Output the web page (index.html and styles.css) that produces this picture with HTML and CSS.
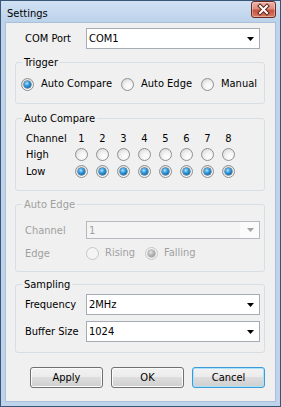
FILE: index.html
```html
<!DOCTYPE html>
<html lang="en">
<head>
  <meta charset="UTF-8" />
  <title>Settings</title>
  <link rel="stylesheet" href="styles.css">
</head>
<body>

  <div class="window">
    <div class="titlebar">
      <span class="title">Settings</span>
      <button class="close-btn" aria-label="Close">
        <svg width="23" height="15" viewBox="0 0 23 15">
          <path d="M8 4l7 7M15 4l-7 7" stroke="#5a2116" stroke-width="4" stroke-linecap="square" />
          <path d="M8 4l7 7M15 4l-7 7" stroke="#fff" stroke-width="2" stroke-linecap="square" />
        </svg>
      </button>
    </div>

    <div class="client">
      <div class="form-row com-row">
        <span>COM Port</span>
        <div class="combo">
          <span>COM1</span>
          <svg class="arrow" width="7" height="4" viewBox="0 0 7 4"><path d="M0 0h7L3.5 4z" /></svg>
        </div>
      </div>

      <fieldset class="group trigger-group">
        <legend>Trigger</legend>
        <div class="radio-row">
          <label class="radio checked"><span class="radio-box"></span>Auto Compare</label>
          <label class="radio"><span class="radio-box"></span>Auto Edge</label>
          <label class="radio"><span class="radio-box"></span>Manual</label>
        </div>
      </fieldset>

      <fieldset class="group compare-group">
        <legend>Auto Compare</legend>
        <div class="channel-grid" id="channelGrid">
          <span class="row-label">Channel</span>
        </div>
      </fieldset>

      <fieldset class="group edge-group disabled">
        <legend>Auto Edge</legend>
        <div class="form-row">
          <span>Channel</span>
          <div class="combo small">
            <span>1</span>
            <svg class="arrow" width="7" height="4" viewBox="0 0 7 4"><path d="M0 0h7L3.5 4z" /></svg>
          </div>
        </div>
        <div class="form-row edge-row">
          <span>Edge</span>
          <div class="radio-row">
            <label class="radio"><span class="radio-box"></span>Rising</label>
            <label class="radio checked"><span class="radio-box"></span>Falling</label>
          </div>
        </div>
      </fieldset>

      <fieldset class="group sampling-group">
        <legend>Sampling</legend>
        <div class="form-row">
          <span>Frequency</span>
          <div class="combo">
            <span>2MHz</span>
            <svg class="arrow" width="7" height="4" viewBox="0 0 7 4"><path d="M0 0h7L3.5 4z" /></svg>
          </div>
        </div>
        <div class="form-row buffer-row">
          <span>Buffer Size</span>
          <div class="combo">
            <span>1024</span>
            <svg class="arrow" width="7" height="4" viewBox="0 0 7 4"><path d="M0 0h7L3.5 4z" /></svg>
          </div>
        </div>
      </fieldset>

      <div class="buttons">
        <button class="btn">Apply</button>
        <button class="btn">OK</button>
        <button class="btn default">Cancel</button>
      </div>
    </div>
  </div>

  <script>
    // build the channel table: header, high row, low row
    const grid = document.getElementById('channelGrid');
    for (let i = 1; i <= 8; i++) {
      const n = document.createElement('span');
      n.className = 'num';
      n.textContent = i;
      grid.appendChild(n);
    }
    ['High', 'Low'].forEach((name) => {
      const label = document.createElement('span');
      label.className = 'row-label';
      label.textContent = name;
      grid.appendChild(label);
      for (let i = 0; i < 8; i++) {
        const r = document.createElement('span');
        r.className = name === 'Low' ? 'radio-box on' : 'radio-box';
        grid.appendChild(r);
      }
    });
  </script>

</body>
</html>
```

FILE: styles.css
```css
* {
  box-sizing: border-box;
}

html,
body {
  margin: 0;
}

body {
  width: 281px;
  height: 407px;
  font-family: "DejaVu Sans Condensed", "Liberation Sans", sans-serif;
  font-size: 11px;
  color: #000;
  background: #fff;
}

.window {
  width: 281px;
  height: 407px;
  display: flex;
  flex-direction: column;
  border: 1px solid #3a5676;
  background: #bfd4eb;
  padding: 0 4px 4px;
}

.titlebar {
  display: flex;
  justify-content: space-between;
  align-items: flex-start;
  height: 21px;
  flex: none;
  margin: 0 -4px;
  padding: 0 4px 0 6px;
  background: linear-gradient(#d0e1f3, #bcd2ea);
}

.title {
  padding-top: 6px;
  line-height: 13px;
}

.close-btn {
  width: 25px;
  height: 17px;
  padding: 0;
  display: flex;
  border: 1px solid #6b2a20;
  border-radius: 3px;
  background: linear-gradient(#eab1a4 0%, #dc8e7e 45%, #c6533e 55%, #d77a63 100%);
  box-shadow: inset 0 0 0 1px rgba(255, 255, 255, 0.35);
}

.client {
  flex: 1;
  display: flex;
  flex-direction: column;
  background: #f0f0f0;
  border: 1px solid #a9c0d8;
  padding: 5px 10px 0 9px;
}

/* label + control rows */
.form-row {
  display: grid;
  grid-template-columns: 61px 174px;
  align-items: center;
  padding-left: 3px;
  white-space: nowrap;
}

.com-row {
  padding-left: 10px;
}

.combo {
  height: 21px;
  display: flex;
  align-items: center;
  border: 1px solid #a5acb5;
  background: #fff;
  padding-left: 2px;
  line-height: 13px;
}

.combo.small {
  height: 18px;
}

.arrow {
  margin-left: auto;
  margin-right: 5px;
  fill: #000;
}

/* group boxes */
.group {
  margin: 0;
  padding: 0 6px;
  border: 1px solid #d5dfe5;
  border-radius: 3px;
  min-inline-size: 0;
}

.group legend {
  padding: 0 2px;
  line-height: 13px;
}

.trigger-group {
  margin-top: 7px;
  padding-top: 8px;
  padding-bottom: 12px;
}

.compare-group {
  margin-top: 8px;
  padding-top: 5px;
  padding-bottom: 10px;
}

.edge-group {
  margin-top: 7px;
  padding-top: 10px;
  padding-bottom: 11px;
}

.sampling-group {
  margin-top: 6px;
  padding-top: 3px;
  padding-bottom: 10px;
}

.edge-row {
  margin-top: 7px;
  height: 14px;
}

.buffer-row {
  margin-top: 6px;
}

/* radio buttons */
.radio-row {
  display: flex;
  gap: 12px;
  line-height: 14px;
  white-space: nowrap;
}

.trigger-group .radio-row {
  margin-left: -1px;
  gap: 9px;
}

.edge-row .radio-row {
  gap: 10px;
}

.radio {
  display: flex;
  flex: none;
  align-items: center;
  gap: 7px;
}

.edge-row .radio {
  gap: 6px;
}

.radio-box {
  position: relative;
  width: 13px;
  height: 13px;
  flex: none;
  border: 1px solid #8d9092;
  border-radius: 50%;
  background: radial-gradient(circle at 65% 70%, #ffffff 0%, #f3f3f3 40%, #d2d2d2 100%);
}

.radio.checked .radio-box::after,
.radio-box.on::after {
  content: '';
  position: absolute;
  left: 2px;
  top: 2px;
  width: 7px;
  height: 7px;
  border-radius: 50%;
  background: radial-gradient(circle at 40% 35%, #b4e6ff 0%, #2d9be0 40%, #0c4f8c 90%);
  box-shadow: 0 0 0 0.5px #1b4468;
}

/* auto compare table */
.channel-grid {
  display: grid;
  grid-template-columns: 45px repeat(8, 21px);
  grid-template-rows: 16px 17px 17px;
  align-items: center;
  justify-items: center;
  margin-left: 4px;
  line-height: 13px;
}

.channel-grid .row-label {
  justify-self: start;
}

/* disabled group */
.disabled,
.disabled legend {
  color: #a0a0a0;
}

.disabled .combo {
  border-color: #b6babe;
  background: linear-gradient(90deg, #f4f4f4 0, #f4f4f4 153px, #fbfbfb 153px);
}

.disabled .arrow {
  fill: #a3a3a3;
}

.disabled .radio-box {
  border-color: #c4c6c8;
  background: #f4f4f4;
}

.disabled .radio.checked .radio-box::after {
  background: radial-gradient(circle at 40% 35%, #e6e6e6 0%, #b0b0b0 50%, #8c8c8c 100%);
  box-shadow: 0 0 0 0.5px #8a8a8a;
}

/* dialog buttons */
.buttons {
  display: flex;
  justify-content: flex-end;
  gap: 8px;
  margin-top: 14px;
}

.btn {
  width: 73px;
  height: 21px;
  padding: 0;
  font-family: inherit;
  font-size: 11px;
  color: #000;
  border: 1px solid #707070;
  border-radius: 3px;
  background: linear-gradient(#f2f2f2 0%, #ebebeb 49%, #dddddd 50%, #cfcfcf 100%);
  box-shadow: inset 0 0 0 1px #fbfbfb;
}

.btn.default {
  border-color: #3c9bd6;
  box-shadow: inset 0 0 0 1px #a8e2fb;
}
```
